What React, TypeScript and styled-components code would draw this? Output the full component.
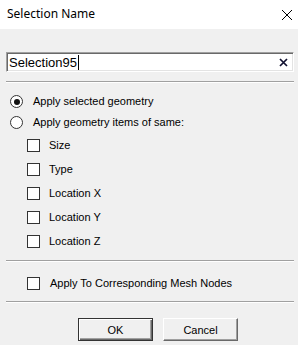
import React, { FC } from 'react';
import styled, { createGlobalStyle } from 'styled-components';

const GlobalStyle = createGlobalStyle`
  html, body {
    margin: 0;
    padding: 0;
    background: #f0f0f0;
  }
  body {
    font-family: 'Liberation Sans', Arial, sans-serif;
    font-size: 11px;
    color: #000;
  }
`;

const Dialog = styled.div`
  width: 298px;
  height: 345px;
  display: flex;
  flex-direction: column;
  background: #f0f0f0;
  overflow: hidden;
`;

const TitleBar = styled.div`
  height: 29px;
  flex-shrink: 0;
  background: #ffffff;
  display: flex;
  align-items: center;
  justify-content: space-between;
  padding: 0 5px 0 7px;
`;

const Title = styled.span`
  font-family: 'Noto Sans', 'Segoe UI', sans-serif;
  font-size: 12px;
  color: #000;
  line-height: 1;
  margin-top: -1px;
`;

const Body = styled.div`
  display: flex;
  flex-direction: column;
  padding: 23px 4px 0 6px;
`;

const NameBox = styled.div`
  height: 20px;
  box-sizing: border-box;
  background: #ffffff;
  border-top: 1px solid #a0a0a0;
  border-left: 1px solid #a0a0a0;
  border-right: 1px solid #ffffff;
  border-bottom: 1px solid #ffffff;
  box-shadow: inset 1px 1px 0 #696969, inset -1px -1px 0 #e3e3e3;
  display: flex;
  align-items: center;
  justify-content: space-between;
  padding: 0 5px 0 2px;
`;

const NameText = styled.span`
  font-size: 13px;
  line-height: 1;
  display: flex;
  align-items: center;
`;

const Caret = styled.span`
  display: inline-block;
  width: 1px;
  height: 15px;
  background: #000;
  margin-left: 1px;
`;

const Separator = styled.div<{ $top: number }>`
  height: 0;
  margin-top: ${({ $top }) => $top}px;
  border-top: 1px solid #a0a0a0;
  border-bottom: 1px solid #ffffff;
`;

const Group = styled.div<{ $top: number }>`
  display: flex;
  flex-direction: column;
  margin-top: ${({ $top }) => $top}px;
`;

const Row = styled.div<{ $height: number; $indent: number; $gap: number }>`
  height: ${({ $height }) => $height}px;
  display: flex;
  align-items: center;
  padding-left: ${({ $indent }) => $indent}px;
  gap: ${({ $gap }) => $gap}px;
`;

const Radio = styled.span<{ $checked?: boolean }>`
  width: 13px;
  height: 13px;
  box-sizing: border-box;
  border-radius: 50%;
  border: 1px solid #333333;
  background: #ffffff;
  display: flex;
  align-items: center;
  justify-content: center;

  &::after {
    content: '';
    width: 6px;
    height: 6px;
    border-radius: 50%;
    background: #111111;
    display: ${({ $checked }) => ($checked ? 'block' : 'none')};
  }
`;

const Box = styled.span`
  width: 13px;
  height: 13px;
  box-sizing: border-box;
  border: 1px solid #333333;
  background: #ffffff;
  flex-shrink: 0;
`;

const Label = styled.span`
  font-size: 11px;
  line-height: 1;
  white-space: nowrap;
`;

const Buttons = styled.div`
  display: flex;
  gap: 10px;
  padding-left: 72px;
  margin-top: 15px;
`;

const Button = styled.div<{ $default?: boolean }>`
  width: 75px;
  height: 23px;
  box-sizing: border-box;
  background: #f0f0f0;
  display: flex;
  align-items: center;
  justify-content: center;
  font-size: 11px;
  border: 1px solid ${({ $default }) => ($default ? '#333333' : 'transparent')};
  border-top-color: ${({ $default }) => ($default ? '#333333' : '#ffffff')};
  border-left-color: ${({ $default }) => ($default ? '#333333' : '#ffffff')};
  border-right-color: ${({ $default }) => ($default ? '#333333' : '#696969')};
  border-bottom-color: ${({ $default }) => ($default ? '#333333' : '#696969')};
  box-shadow: ${({ $default }) =>
    $default
      ? 'inset 1px 1px 0 #ffffff, inset -1px -1px 0 #696969, inset -2px -2px 0 #a0a0a0'
      : 'inset -1px -1px 0 #a0a0a0'};
`;

const CloseIcon: FC = () => (
  <svg width="12" height="12" viewBox="0 0 12 12">
    <path d="M1 1 L11 11 M11 1 L1 11" stroke="#000" strokeWidth="1" fill="none" />
  </svg>
);

const ClearIcon: FC = () => (
  <svg width="9" height="9" viewBox="0 0 9 9">
    <path d="M1 1 L8 8 M8 1 L1 8" stroke="#101030" strokeWidth="1.7" fill="none" />
  </svg>
);

const filters = ['Size', 'Type', 'Location X', 'Location Y', 'Location Z'];

const App: FC = () => {
  return (
    <>
      <GlobalStyle />
      <Dialog>
        <TitleBar>
          <Title>Selection Name</Title>
          <CloseIcon />
        </TitleBar>
        <Body>
          <NameBox>
            <NameText>
              Selection95
              <Caret />
            </NameText>
            <ClearIcon />
          </NameBox>
          <Separator $top={9} />
          <Group $top={8}>
            <Row $height={21} $indent={4} $gap={10}>
              <Radio $checked />
              <Label>Apply selected geometry</Label>
            </Row>
            <Row $height={21} $indent={4} $gap={10}>
              <Radio />
              <Label>Apply geometry items of same:</Label>
            </Row>
            {filters.map((f) => (
              <Row key={f} $height={24} $indent={21} $gap={9}>
                <Box />
                <Label>{f}</Label>
              </Row>
            ))}
          </Group>
          <Separator $top={7} />
          <Group $top={9}>
            <Row $height={24} $indent={21} $gap={10}>
              <Box />
              <Label>Apply To Corresponding Mesh Nodes</Label>
            </Row>
          </Group>
          <Separator $top={6} />
          <Buttons>
            <Button $default>OK</Button>
            <Button>Cancel</Button>
          </Buttons>
        </Body>
      </Dialog>
    </>
  );
};

export default App;
